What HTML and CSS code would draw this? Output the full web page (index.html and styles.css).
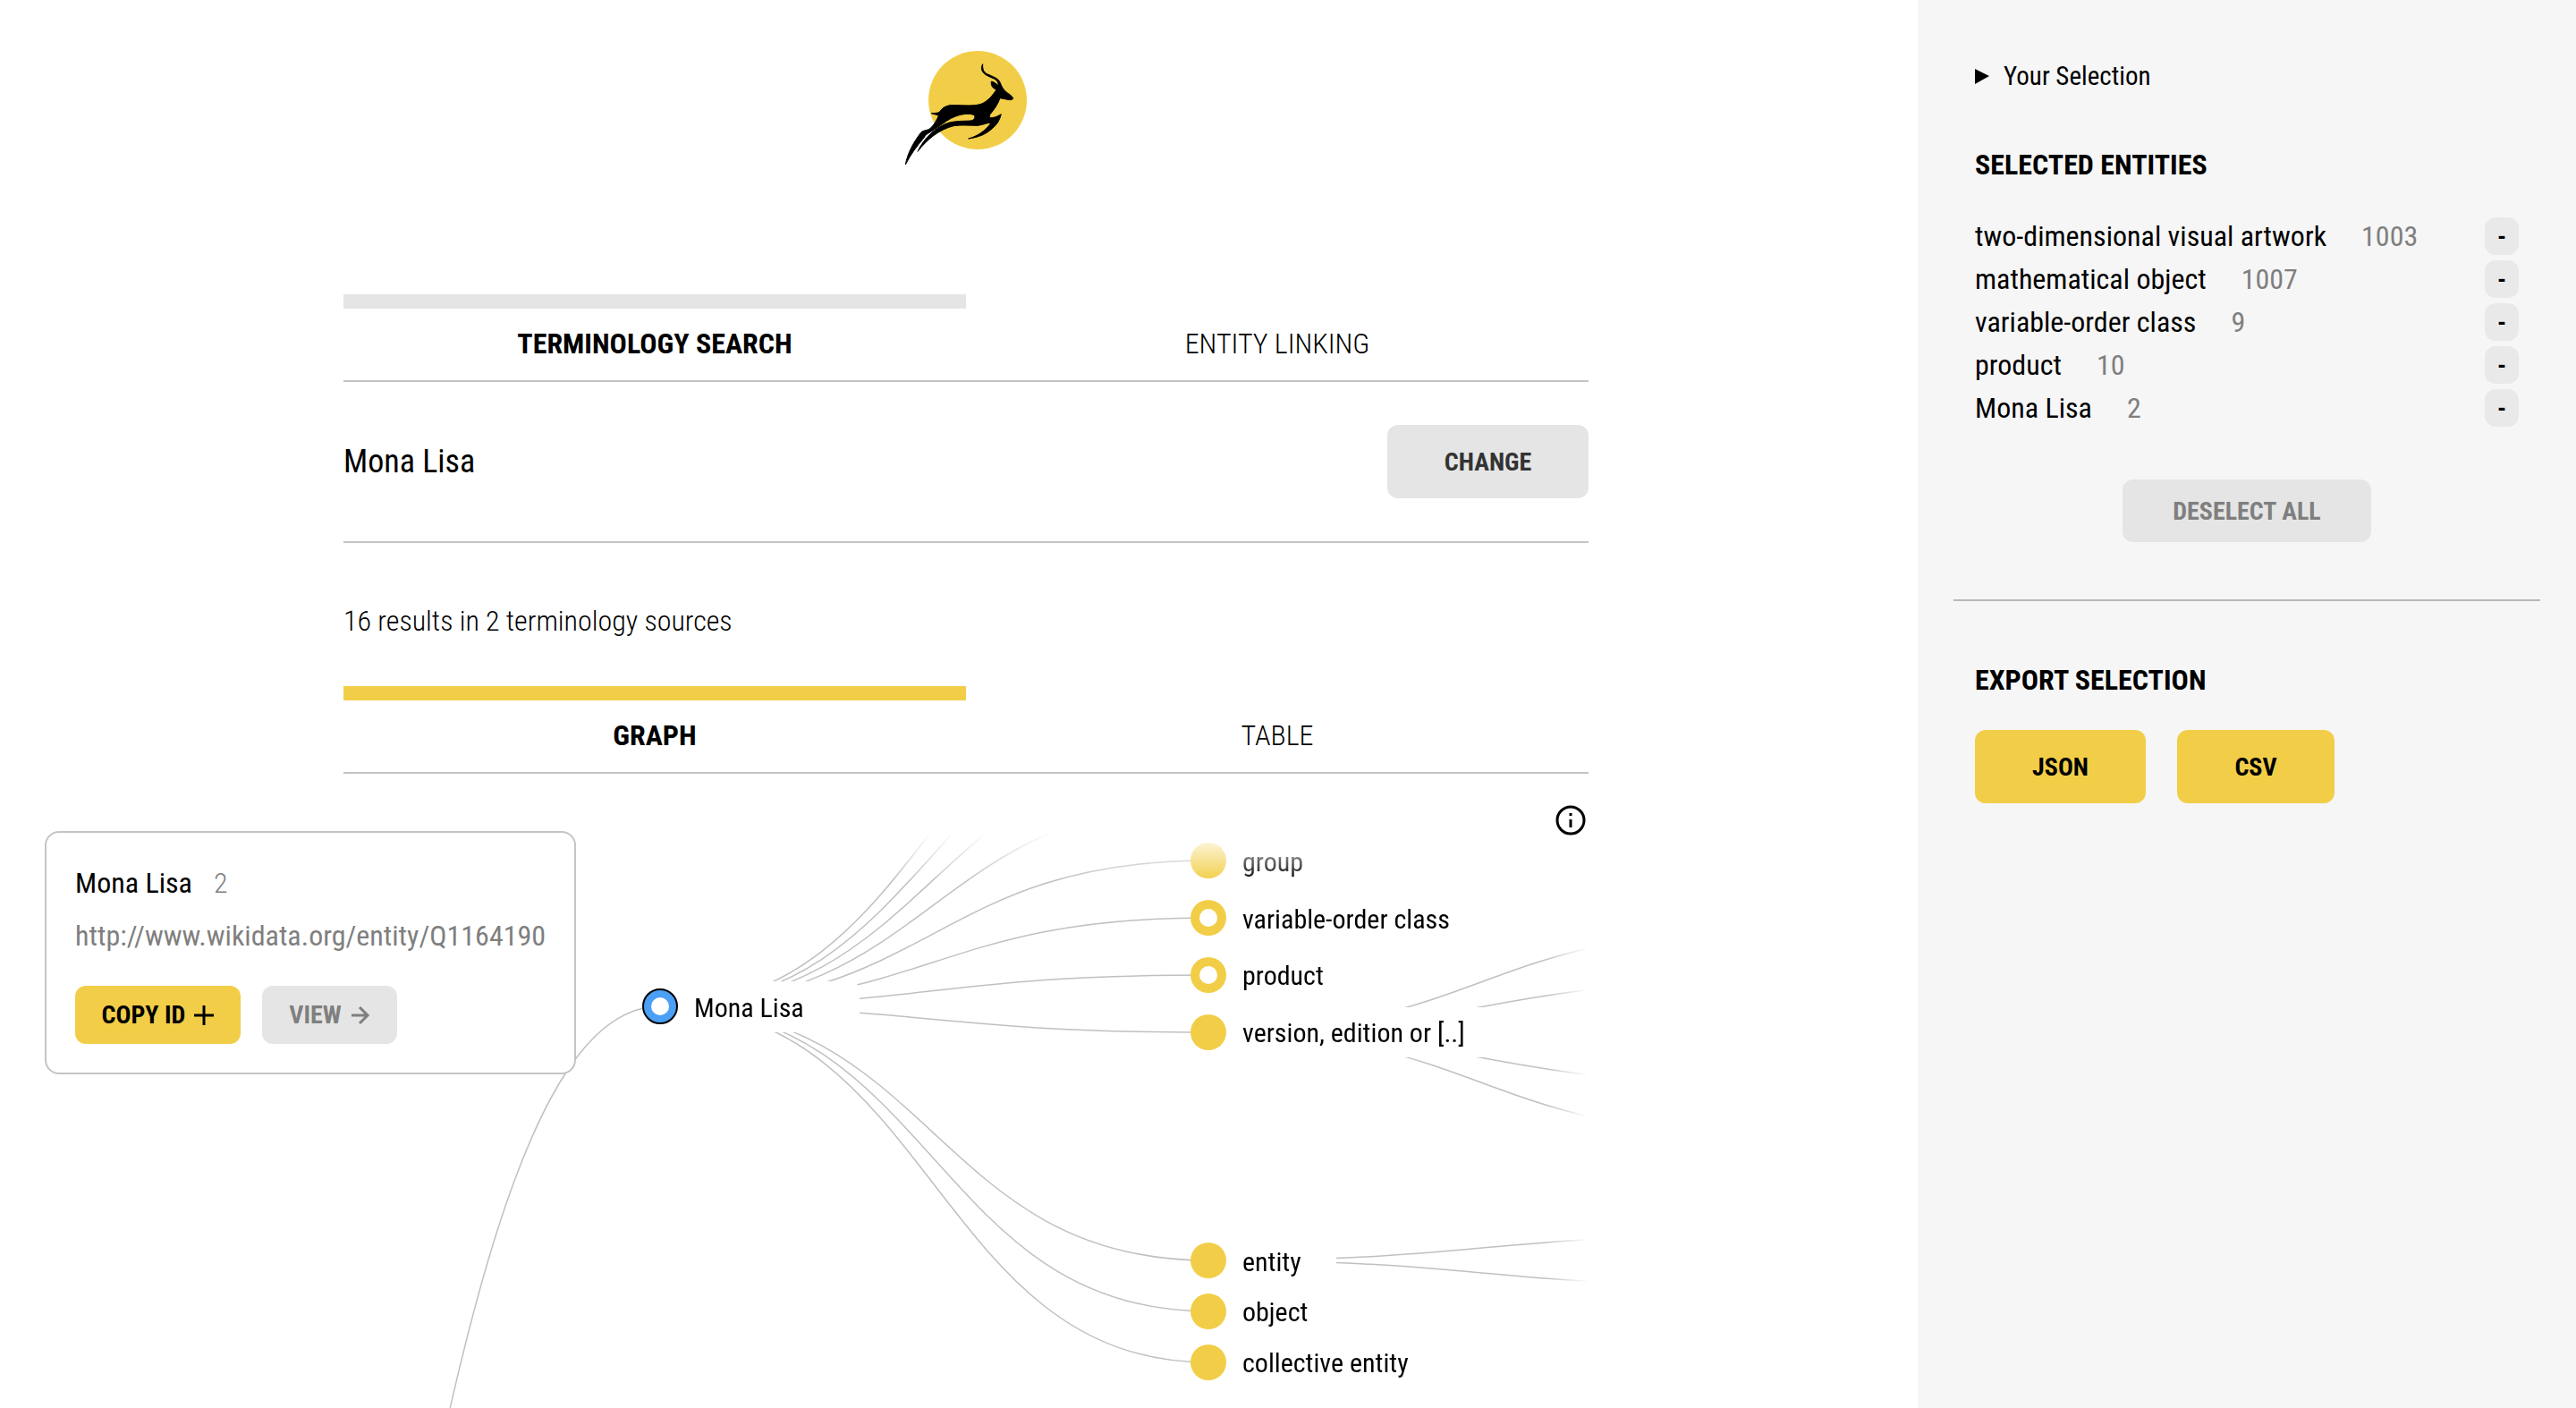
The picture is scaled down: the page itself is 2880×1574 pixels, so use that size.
FILE: index.html
```html
<!DOCTYPE html>
<html lang="en">
<head>
<meta charset="utf-8">
<title>Terminology Search</title>
<link rel="stylesheet" href="styles.css">
</head>
<body>
<div class="page">
  <main class="main">
    <div class="content">
      <header class="brand">
        <svg class="logo" viewBox="66 48 408 384" role="img" aria-label="Antelope">
          <circle class="logo-sun" cx="309" cy="216" r="165"/>
          <path class="logo-antelope" d="M326 95 C325 112 329 122 341 128 C360 137 378 142 384 156 C390 172 396 182 408 191 C417 197 425 203 428 209 C427 213 424 215 419 215 C408 214 396 211 384 209 C378 227 365 247 352 262 C348 268 347 274 353 275 C364 275 377 270 388 263 C383 283 373 299 360 309 C340 329 312 341 278 345 C308 337 335 319 354 292 C342 291 330 298 310 301 C281 301 255 298 229 302 C180 314 139 348 108 388 C128 344 170 304 214 291 C244 284 276 287 290 284 C300 280 303 270 295 265 C278 259 254 263 236 270 C214 277 195 293 176 306 C166 312 158 319 149 324 C140 328 134 333 129 342 C104 371 84 399 67 432 C73 397 93 357 120 323 C130 315 142 319 152 309 C164 297 173 281 178 268 C170 263 163 264 154 260 C164 259 174 260 181 256 C188 244 200 235 216 233 C250 231 292 238 320 229 C340 222 361 199 372 180 C359 176 353 167 355 153 C364 154 374 162 378 169 C379 158 375 150 366 145 C349 137 332 132 325 119 C320 110 322 102 326 95 Z"/>
        </svg>
      </header>

      <nav class="tabs tabs-neutral" aria-label="Mode">
        <a href="#search" class="tab is-active">TERMINOLOGY SEARCH</a>
        <a href="#linking" class="tab">ENTITY LINKING</a>
      </nav>

      <section class="query" id="search">
        <span class="query-text">Mona Lisa</span>
        <button type="button" class="btn btn-large btn-change">CHANGE</button>
      </section>

      <p class="summary">16 results in 2 terminology sources</p>

      <nav class="tabs tabs-accent" aria-label="View">
        <a href="#graph" class="tab is-active">GRAPH</a>
        <a href="#table" class="tab">TABLE</a>
      </nav>

      <section class="graph" id="graph">
        <svg class="graph-canvas" viewBox="0 0 1392 645" preserveAspectRatio="xMinYMin meet">
          <g class="edges">
            <path d="M-259 1805 C47 1805 47 196 354 196"/>
            <path d="M354 196 C660 196 660 -202 967 -202"/>
            <path d="M354 196 C660 196 660 -145 967 -145"/>
            <path d="M354 196 C660 196 660 -88 967 -88"/>
            <path d="M354 196 C660 196 660 -31 967 -31"/>
            <path d="M354 196 C660 196 660 33 967 33"/>
            <path d="M354 196 C660 196 660 97 967 97"/>
            <path d="M354 196 C660 196 660 161 967 161"/>
            <path d="M354 196 C660 196 660 225 967 225"/>
            <path d="M354 196 C660 196 660 480 967 480"/>
            <path d="M354 196 C660 196 660 537 967 537"/>
            <path d="M354 196 C660 196 660 594 967 594"/>
            <path d="M967 225 C1273 225 1273 112 1580 112"/>
            <path d="M967 225 C1273 225 1273 168 1580 168"/>
            <path d="M967 225 C1273 225 1273 282 1580 282"/>
            <path d="M967 225 C1273 225 1273 338 1580 338"/>
            <path d="M967 480 C1273 480 1273 452 1580 452"/>
            <path d="M967 480 C1273 480 1273 508 1580 508"/>
          </g>
          <g class="label-backs">
            <rect x="354" y="168" width="223" height="57" rx="10"/>
            <rect x="967" y="197" width="360" height="56"/>
            <rect x="967" y="452" width="143" height="56"/>
          </g>
          <g class="nodes">
            <circle class="node-current" cx="354" cy="196" r="19"/>
            <circle cx="967" cy="33" r="20"/>
            <circle cx="967" cy="97" r="20"/>
            <circle cx="967" cy="161" r="20"/>
            <circle cx="967" cy="225" r="20"/>
            <circle cx="967" cy="480" r="20"/>
            <circle cx="967" cy="537" r="20"/>
            <circle cx="967" cy="594" r="20"/>
          </g>
          <g class="node-holes">
            <circle cx="354" cy="196" r="10"/>
            <circle cx="967" cy="97" r="10"/>
            <circle cx="967" cy="161" r="10"/>
          </g>
          <g class="labels">
            <text x="392" y="208">Mona Lisa</text>
            <text x="1005" y="45">group</text>
            <text x="1005" y="109">variable-order class</text>
            <text x="1005" y="172">product</text>
            <text x="1005" y="236">version, edition or [..]</text>
            <text x="1005" y="492">entity</text>
            <text x="1005" y="548">object</text>
            <text x="1005" y="605">collective entity</text>
          </g>
        </svg>

        <button type="button" class="info" aria-label="Legend">
          <svg viewBox="0 0 34 34"><circle cx="17" cy="17" r="15"/><path d="M17 16v9M17 9v3"/></svg>
        </button>

        <article class="popup">
          <h3 class="popup-title">Mona Lisa <span class="popup-count">2</span></h3>
          <a class="popup-link" href="http://www.wikidata.org/entity/Q1164190">http://www.wikidata.org/entity/Q1164190</a>
          <div class="popup-actions">
            <button type="button" class="btn btn-accent btn-copy">COPY ID
              <svg class="btn-icon" viewBox="0 0 22 22"><path d="M11 0v22M0 11h22"/></svg>
            </button>
            <button type="button" class="btn btn-muted btn-view">VIEW
              <svg class="btn-icon" viewBox="0 0 22 22"><path d="M1 11h18M10 2l9 9-9 9"/></svg>
            </button>
          </div>
        </article>
      </section>
    </div>
  </main>

  <aside class="sidebar">
    <details class="disclosure">
      <summary><svg class="marker" viewBox="0 0 16 18"><path d="M0 1l16 8-16 9z"/></svg>Your Selection</summary>
    </details>

    <h2 class="side-title">SELECTED ENTITIES</h2>
    <ul class="entities">
      <li><span>two-dimensional visual artwork</span><span class="count">1003</span><button type="button" class="remove">-</button></li>
      <li><span>mathematical object</span><span class="count">1007</span><button type="button" class="remove">-</button></li>
      <li><span>variable-order class</span><span class="count">9</span><button type="button" class="remove">-</button></li>
      <li><span>product</span><span class="count">10</span><button type="button" class="remove">-</button></li>
      <li><span>Mona Lisa</span><span class="count">2</span><button type="button" class="remove">-</button></li>
    </ul>
    <button type="button" class="btn btn-muted btn-deselect">DESELECT ALL</button>

    <hr class="rule">

    <h2 class="side-title">EXPORT SELECTION</h2>
    <div class="exports">
      <button type="button" class="btn btn-accent btn-large btn-json">JSON</button>
      <button type="button" class="btn btn-accent btn-large btn-csv">CSV</button>
    </div>
  </aside>
</div>
</body>
</html>
```

FILE: styles.css
```css
* {
  box-sizing: border-box;
}

body {
  margin: 0;
  background: #fff;
  color: #000;
  font-family: "Roboto Condensed", "Liberation Sans Narrow", Roboto, sans-serif;
  font-size: 32px;
  line-height: 40px;
}

button {
  font-family: inherit;
  cursor: pointer;
}

a {
  color: inherit;
  text-decoration: none;
}

.page {
  display: flex;
  min-height: 100vh;
}

.main {
  flex: 1;
  min-width: 0;
  padding-left: 16px;
}

.content {
  max-width: 1392px;
  margin: 0 auto;
}

/* Header */
.brand {
  display: flex;
  justify-content: center;
  padding: 56px 0 145px;
}

.logo {
  width: 136px;
  height: 128px;
}

.logo-sun {
  fill: #f2ce48;
}

.logo-antelope {
  stroke: #000;
  stroke-width: 3;
  stroke-linejoin: round;
}

/* Tabs */
.tabs {
  display: grid;
  grid-template-columns: 1fr 1fr;
  border-bottom: 2px solid #c4c4c4;
}

.tab {
  padding: 19px 0 21px;
  border-top: 16px solid transparent;
  font-weight: 300;
  text-align: center;
}

.tab.is-active {
  font-weight: 700;
}

.tabs-neutral .is-active {
  border-top-color: #e5e5e5;
}

.tabs-accent .is-active {
  border-top-color: #f2ce48;
}

/* Buttons */
.btn {
  display: inline-flex;
  align-items: center;
  justify-content: center;
  gap: 10px;
  height: 65px;
  padding: 0;
  border: 0;
  border-radius: 12px;
  background: #e5e5e5;
  color: #333;
  font-size: 28px;
  font-weight: 700;
}

.btn-large {
  height: 82px;
}

.btn-accent {
  background: #f2ce48;
  color: #000;
}

.btn-muted {
  color: #7f7f7f;
}

.btn-icon {
  width: 22px;
  height: 22px;
  fill: none;
  stroke: currentColor;
  stroke-width: 3;
}

.btn-change {
  width: 225px;
}

.btn-copy {
  width: 185px;
}

.btn-view {
  width: 151px;
}

.btn-deselect {
  height: 70px;
  width: 278px;
}

.btn-json {
  width: 191px;
}

.btn-csv {
  width: 176px;
}

/* Query */
.query {
  display: flex;
  align-items: center;
  justify-content: space-between;
  padding: 48px 0;
  border-bottom: 2px solid #c4c4c4;
}

.query-text {
  font-size: 36px;
}

.summary {
  margin: 67px 0 53px;
  font-weight: 300;
}

/* Graph */
.graph {
  position: relative;
  padding-top: 64px;
}

.graph-canvas {
  display: block;
  width: 100%;
  height: 645px;
  mask-image: linear-gradient(to bottom, transparent, #000 56px), linear-gradient(to left, transparent, #000 48px);
  mask-composite: intersect;
}

.edges {
  fill: none;
  stroke: #c0c0c0;
  stroke-width: 1.5;
}

.label-backs,
.node-holes {
  fill: #fff;
}

.nodes {
  fill: #f2ce48;
}

.node-current {
  fill: #4b9ff5;
  stroke: #000;
  stroke-width: 2;
}

.labels {
  font-size: 30px;
}

.info {
  position: absolute;
  top: 35px;
  right: 3px;
  width: 34px;
  height: 34px;
  padding: 0;
  border: 0;
  background: none;
}

.info svg {
  display: block;
  fill: none;
  stroke: #000;
  stroke-width: 3;
}

.popup {
  position: absolute;
  top: 64px;
  left: -334px;
  width: 594px;
  height: 272px;
  padding: 36px 32px;
  border: 2px solid #c4c4c4;
  border-radius: 16px;
  background: #fff;
}

.popup-title {
  display: flex;
  gap: 24px;
  margin: 0 0 19px;
  font-size: 32px;
  font-weight: 400;
}

.popup-count {
  color: #7f7f7f;
  font-weight: 300;
}

.popup-link {
  display: block;
  color: #7f7f7f;
}

.popup-actions {
  display: flex;
  gap: 24px;
  margin-top: 36px;
}

/* Sidebar */
.sidebar {
  width: 736px;
  padding: 65px 64px;
  background: #f6f6f6;
}

.disclosure summary {
  display: flex;
  align-items: center;
  gap: 16px;
  font-size: 29px;
  list-style: none;
}

.marker {
  width: 16px;
  height: 18px;
}

.side-title {
  margin: 59px 0 36px;
  font-size: 32px;
  font-weight: 700;
}

.entities {
  margin: 0;
  padding: 0;
  list-style: none;
}

.entities li {
  display: flex;
  align-items: center;
  gap: 39px;
  height: 48px;
}

.count {
  color: #7f7f7f;
}

.remove {
  width: 38px;
  height: 42px;
  margin-left: auto;
  padding: 0;
  border: 0;
  border-radius: 12px;
  background: #e9e9ea;
  color: #000;
  font-size: 28px;
  font-weight: 700;
}

.btn-deselect {
  display: flex;
  margin: 56px auto 0;
}

.rule {
  margin: 64px -24px 0;
  border: 0;
  border-top: 2px solid #b8b8b8;
}

.rule + .side-title {
  margin-top: 68px;
}

.exports {
  display: flex;
  gap: 35px;
}
```
